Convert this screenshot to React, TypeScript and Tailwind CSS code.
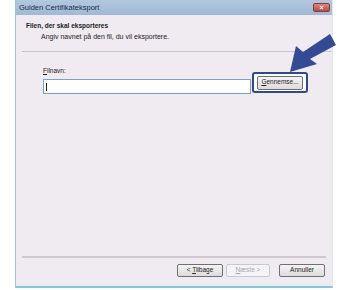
import React from "react";

const font = { fontFamily: '"Liberation Sans", Arial, sans-serif' };

function Btn({ children, disabled, className = "" }: { children: React.ReactNode; disabled?: boolean; className?: string }) {
  return (
    <div
      className={
        "flex items-center justify-center rounded-[2px] border text-[6.5px] leading-none " +
        (disabled
          ? "border-[#c4c8cf] bg-[#f4f4f6] text-[#a7a9ad] "
          : "border-[#707070] bg-gradient-to-b from-[#f4f4f4] to-[#dcdcdc] text-[#222] ") +
        className
      }
    >
      {children}
    </div>
  );
}

export default function App() {
  return (
    <div className="relative h-[290px] w-[347px] bg-white" style={font}>
      <div className="ml-[15px] flex h-[288px] w-[318px] flex-col border-l border-r border-b-2 border-l-[#a7c3dc] border-r-[#dfe7ef] border-b-[#7ec8d8] bg-[#efebf0]">
        {/* title bar */}
        <div className="flex h-[15px] items-center justify-between bg-gradient-to-b from-[#b2c8df] to-[#9fb9d5] pl-[3px] pr-[2px]">
          <span className="text-[7.5px] text-[#1c2c48]">Guiden Certifikateksport</span>
          <div className="flex h-[9px] w-[17px] items-center justify-center rounded-[2px] border border-[#8a3a33] bg-gradient-to-b from-[#d98a7f] to-[#b94a3e] text-[7px] font-bold leading-none text-white">
            ×
          </div>
        </div>
        {/* header */}
        <div className="flex h-[36px] flex-col pl-[10px] pt-[6px]">
          <span className="text-[6.5px] font-bold leading-[9px] text-[#1a1a1a]">Filen, der skal eksporteres</span>
          <span className="pl-[15px] pt-[2px] text-[7px] leading-[9px] text-[#1a1a1a]">Angiv navnet på den fil, du vil eksportere.</span>
        </div>
        <div className="ml-[6px] h-[1px] bg-[#c9c7cb]" />
        {/* content */}
        <div className="flex flex-col pl-[27px] pt-[15px]">
          <span className="text-[6.5px] leading-[8px] text-[#1a1a1a]">
            <u>F</u>ilnavn:
          </span>
          <div className="mt-[-4px] flex items-center">
            <div className="mt-[8px] flex h-[15px] w-[208px] items-center border border-[#7da2c6] bg-white pl-[2px]">
              <div className="h-[8px] w-[1px] bg-[#222]" />
            </div>
            <div className="ml-[1px] flex h-[21px] w-[56px] items-center justify-center rounded-[3px] border-2 border-[#2e4a8c] bg-white">
              <Btn className="h-[14px] w-[46px]">
                <span>
                  <u>G</u>ennemse...
                </span>
              </Btn>
            </div>
          </div>
        </div>
        <div className="flex-1" />
        <div className="mx-[6px] h-[2px] bg-[#cdcbcf]" />
        <div className="flex h-[28px] items-center justify-end gap-[3px] pr-[7px] pb-[3px]">
          <Btn className="h-[13px] w-[46px] border-[#3c7fb1] from-[#eaf6fd] to-[#bee6fd]">
            <span>
              &lt; <u>T</u>ilbage
            </span>
          </Btn>
          <Btn disabled className="h-[13px] w-[44px] mr-[6px]">
            <span>
              <u>N</u>æste &gt;
            </span>
          </Btn>
          <Btn className="h-[13px] w-[46px]">Annuller</Btn>
        </div>
      </div>
      {/* arrow overlay */}
      <svg className="absolute left-0 top-0" width="347" height="290" viewBox="0 0 347 290">
        <polygon points="290,72 296,46 303,52 330,34 336,45 310,59 317,64" fill="#334b94" />
      </svg>
    </div>
  );
}
